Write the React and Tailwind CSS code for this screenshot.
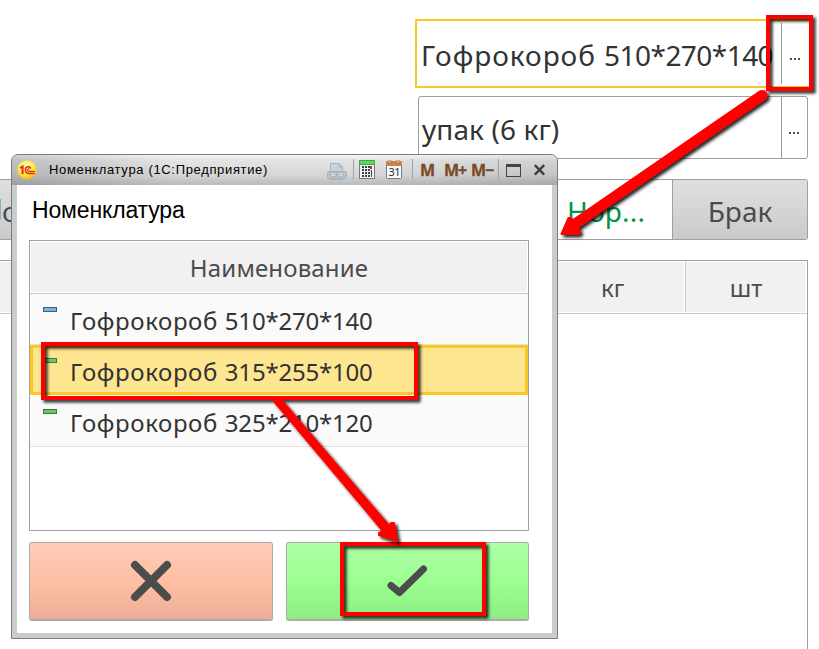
import React from "react";

const SANS = "font-['Noto_Sans','Open_Sans',sans-serif]";

function MoreButton() {
  return (
    <div className="flex shrink-0 items-center justify-center gap-[2px]">
      <i className="size-[2px] bg-[#4c4c4c]" />
      <i className="size-[2px] bg-[#4c4c4c]" />
      <i className="size-[2px] bg-[#4c4c4c]" />
    </div>
  );
}

function Background() {
  return (
    <div className={`flex h-full flex-col ${SANS} text-[#333]`}>
      <div className="mt-[19px] ml-[415px] flex h-[69px] w-[396px] border-2 border-[#f9c922] py-[2px]">
        <div className="flex w-[364px] items-center pl-[4px] text-[28px] whitespace-nowrap">
          <span className="pt-[3px] tracking-[0.95px]">
            Гофрокороб <span className="tracking-[-0.55px]">510*270*140</span>
          </span>
        </div>
        <div className="flex w-[26px] items-center justify-center border-l border-[#999] pt-[11px]">
          <MoreButton />
        </div>
      </div>
      <div className="mt-[8px] ml-[418px] flex h-[63px] w-[390px] rounded-[3px] border border-[#a0a0a0]">
        <div className="flex w-[362px] items-center pl-[3px] text-[28px] tracking-[0.1px] whitespace-nowrap">
          <span className="pt-[3px]">упак (6 кг)</span>
        </div>
        <div className="flex w-[25px] items-center justify-center border-l border-[#999] pt-[11px]">
          <MoreButton />
        </div>
      </div>
      <div className="mt-[20px] flex h-[61px] w-[808px] rounded-r-[3px] border border-l-0 border-[#a0a0a0]">
        <div className="flex w-[300px] items-center bg-linear-to-b from-[#dfdfdf] to-[#cbcbcb] text-[28px] text-[#4c4c4c]">
          <i className="h-[21px] w-px bg-[#79b4d6]" />
          <span className="ml-[1px] pt-[3px]">о</span>
        </div>
        <div className="flex w-[373px] items-center border-r border-[#a0a0a0] pl-[267px] text-[28px] text-[#009646]">
          <span className="pt-[2px] tracking-[0.2px]">Нор...</span>
        </div>
        <div className="flex flex-1 items-center justify-center bg-linear-to-b from-[#dfdfdf] to-[#cbcbcb] text-[28px] text-[#4c4c4c]">
          <span className="pt-[2px]">Брак</span>
        </div>
      </div>
      <div className="mt-[20px] w-[808px] flex-1 border-t border-r border-[#a0a0a0]">
        <div className="flex h-[53px] border-b border-[#c8c8c8] pt-px pr-px pb-px text-[24px] text-[#4c4c4c]">
          <div className="mr-px flex w-[684px] items-center bg-[#f1f1f1] pt-[2px] pl-[601px]">кг</div>
          <div className="flex flex-1 items-center justify-center border-l border-[#c8c8c8] bg-[#f1f1f1] pt-[2px]">шт</div>
        </div>
      </div>
    </div>
  );
}

function Logo() {
  return (
    <svg width="20" height="20" viewBox="0 0 20 20">
      <defs>
        <radialGradient id="sun" cx="45%" cy="30%" r="70%">
          <stop offset="0" stopColor="#fffbb8" />
          <stop offset="0.6" stopColor="#ffe93c" />
          <stop offset="1" stopColor="#f2b624" />
        </radialGradient>
      </defs>
      <circle cx="10" cy="10" r="9.6" fill="url(#sun)" />
      <g fill="none" stroke="#e02a1c" strokeWidth="1.5">
        <path d="M3.2 8 L5.6 6.6 V14" strokeWidth="2" />
        <path d="M13.8 8.5 C13 5.800 8.400 6 8.400 9.700 C8.400 12.200 10 13.400 12 13.400 H17.800" />
        <path d="M12.400 9.200 C11.600 8.400 10.400 9 10.500 10 C10.600 11 11.300 11.300 12.200 11.300 H17.800" strokeWidth="1.200" />
      </g>
    </svg>
  );
}

function PrinterIcon() {
  return (
    <svg className="mt-[2px]" width="20" height="19" viewBox="0 0 20 19" fill="#bcc4ca" stroke="#a9b3bc">
      <path d="M3.500 9 V1.500 H12 L15.500 5 V9" fill="#ccd3d8" />
      <path d="M12 1.500 V5 H15.500" fill="none" />
      <rect x="0.500" y="9.500" width="19" height="7" rx="1.500" />
      <rect x="3.500" y="10.500" width="6.500" height="4" rx="2" fill="#d3d7da" />
      <rect x="10" y="10.500" width="6.500" height="4" rx="2" fill="#d3d7da" />
      <path d="M7.500 12.500 H12.500" />
      <path d="M3 17.500 H17" />
    </svg>
  );
}

function CalculatorIcon() {
  return (
    <svg width="16" height="19" viewBox="0 0 16 19" shapeRendering="crispEdges">
      <rect x="0" y="1" width="16" height="18" fill="#6e7a86" />
      <rect x="1" y="2" width="14" height="16" fill="#f3f5f6" />
      <rect x="0" y="0" width="16" height="5" fill="#43a84a" />
      <rect x="1" y="1" width="14" height="3" fill="#5fd25f" />
      {[6, 9, 12, 15].map((y) =>
        [3, 6, 9].map((x) => <rect key={`${x}-${y}`} x={x} y={y} width="2" height="2" fill="#3a4148" />)
      )}
      <rect x="11" y="6" width="2" height="3" fill="#f01818" />
      <rect x="12" y="10" width="1" height="7" fill="#3a4148" />
    </svg>
  );
}

function CalendarIcon() {
  return (
    <svg width="17" height="19" viewBox="0 0 17 19">
      <rect x=".5" y="2.500" width="15" height="16" rx="1" fill="#f8f9fa" stroke="#6e7f8d" />
      <rect x="0" y="1" width="16" height="5" rx="1" fill="#c98350" />
      <rect x="3" y="0" width="2" height="3" fill="#f3d9c2" stroke="#9a5a30" strokeWidth=".5" />
      <rect x="11" y="0" width="2" height="3" fill="#f3d9c2" stroke="#9a5a30" strokeWidth=".5" />
      <text x="8.200" y="15.800" textAnchor="middle" fontSize="11" letterSpacing="-0.500" fontFamily="Noto Sans, sans-serif" fill="#26323c">31</text>
    </svg>
  );
}

function TitleBar() {
  return (
    <div className="flex h-[30px] items-center rounded-t-[6px] bg-[linear-gradient(90deg,rgba(110,112,116,0.28)_0%,rgba(255,255,255,0.15)_30%,rgba(255,255,255,0.15)_65%,rgba(110,112,116,0.12)_100%),linear-gradient(180deg,#f4f4f4_0%,#dedede_20%,#cfd0d1_65%,#adaeb0_100%)] pl-[5px]">
      <Logo />
      <span className="ml-[12px] w-[278px] font-['Liberation_Sans',Arial,sans-serif] text-[13px] tracking-[0.66px] whitespace-nowrap text-black">
        Номенклатура (1С:Предприятие)
      </span>
      <PrinterIcon />
      <i className="mb-[2px] ml-[6px] h-[20px] w-px bg-[#a2a2a2]" />
      <div className="mb-[2px] ml-[5px]"><CalculatorIcon /></div>
      <div className="mb-[2px] ml-[11px]"><CalendarIcon /></div>
      <i className="mb-[2px] ml-[9px] h-[20px] w-px bg-[#a2a2a2]" />
      <div className="ml-[7px] flex font-['Open_Sans',sans-serif] text-[16px] leading-none font-bold text-[#7a4a26] [-webkit-text-stroke:0.3px_#7a4a26]">
        <span className="w-[24px] tracking-[-1px]">M</span>
        <span className="w-[27px] tracking-[-1px]">M+</span>
        <span className="w-[27px] tracking-[-1px]">M−</span>
      </div>
      <i className="mb-[2px] h-[20px] w-px bg-[#a2a2a2]" />
      <i className="ml-[7px] h-[13px] w-[15px] border border-t-[3px] border-[#444]" />
      <svg className="ml-[13px]" width="11" height="12" viewBox="0 0 11 12" stroke="#3c3c3c" strokeWidth="2.400">
        <path d="M.8 1.200 L10.200 10.600 M10.200 1.200 L.8 10.600" />
      </svg>
    </div>
  );
}

const rows = [
  { name: "Гофрокороб", size: "510*270*140", blue: true },
  { name: "Гофрокороб", size: "315*255*100", selected: true },
  { name: "Гофрокороб", size: "325*210*120" },
];

function Dialog() {
  return (
    <div className="absolute top-[154px] left-[11px] flex h-[485px] w-[547px] flex-col rounded-t-[7px] border border-[#7c7c7e] bg-[#c9cbcc]">
      <TitleBar />
      <div className="mx-[5px] mb-[5px] flex flex-1 flex-col bg-white px-[12px] pb-[12px]">
        <h1 className="mt-[12px] ml-[3px] h-[43px] font-['Liberation_Sans',Arial,sans-serif] text-[23px] leading-[26px] tracking-[-0.15px] text-black">
          Номенклатура
        </h1>
        <div className={`h-[291px] w-[500px] border border-[#a0a0a0] ${SANS} text-[24px] text-[#333]`}>
          <div className="h-[53px] border-b border-[#c8c8c8] p-px">
            <div className="flex h-full items-center justify-center bg-[#f1f1f1] pt-[2px] tracking-[0.15px] text-[#4c4c4c]">Наименование</div>
          </div>
          {rows.map((r) => (
            <div
              key={r.size}
              className={
                r.selected
                  ? "mb-px flex h-[50px] border-[3px] border-[#f9c922] bg-[#fee590] pl-[10px]"
                  : "flex h-[51px] border-b border-[#e2e2e2] bg-[#fafafa] pl-[13px]"
              }
            >
              <i
                className={`h-[5px] w-[14px] border ${r.selected ? "mt-[10px]" : "mt-[13px]"} ${
                  r.blue ? "border-[#355f80] bg-[#7fb2d8]" : "border-[#2f7f35] bg-[#6cc76c]"
                }`}
              />
              <span
                className={`ml-[13px] leading-[54px] tracking-[0.62px] whitespace-nowrap ${r.selected ? "-mt-[3px]" : ""}`}
              >
                {r.name} <span className="tracking-[-0.2px]">{r.size}</span>
              </span>
            </div>
          ))}
        </div>
        <div className="mt-[11px] flex gap-[13px]">
          <div className="flex h-[79px] w-[244px] items-center justify-center rounded-[3px] border border-b-2 border-[#ababab] bg-linear-to-b from-[#ffcdb8] via-[#ffbfa4] to-[#ecae97]">
            <svg width="42" height="42" viewBox="0 0 42 42" stroke="#4c4c4c" strokeWidth="8" strokeLinecap="round">
              <path d="M5 5 L37 37 M37 5 L5 37" />
            </svg>
          </div>
          <div className="flex h-[79px] w-[243px] items-center justify-center rounded-[3px] border border-b-2 border-[#ababab] bg-linear-to-b from-[#aeffa5] via-[#9bff92] to-[#8ded84] pr-[2px]">
            <svg width="42" height="34" viewBox="0 0 42 34" fill="none" stroke="#4c4c4c" strokeWidth="7" strokeLinecap="round" strokeLinejoin="round">
              <path d="M5 21.500 L13.500 28.500 L37.500 5" />
            </svg>
          </div>
        </div>
      </div>
    </div>
  );
}

function Annotations() {
  return (
    <svg className="absolute top-0 left-0" width="819" height="649" viewBox="0 0 819 649">
      <defs>
        <filter id="shade" x="-10%" y="-10%" width="120%" height="120%">
          <feDropShadow dx="2.500" dy="2.500" stdDeviation="1.500" floodColor="#000" floodOpacity="0.850" />
        </filter>
      </defs>
      <g filter="url(#shade)" fill="none" stroke="#f00" strokeWidth="4">
        <rect x="768" y="17" width="43" height="72" />
        <rect x="43" y="344" width="373" height="54" />
        <rect x="342" y="544" width="142" height="70" />
      </g>
      <g filter="url(#shade)" fill="#f00" stroke="#f00" strokeLinejoin="round">
        <path d="M760 92 L574 220 L577 227 L765 98 Z" strokeWidth="3" />
        <circle cx="762.500" cy="95" r="5" strokeWidth="0" />
        <path d="M561.500 234 L568.500 218 L572 219 L580 232 L578 234 Z" strokeWidth="2" />
        <path d="M274 401 L384 532 L390 527 L282 401 Z" strokeWidth="2" />
        <path d="M397 541 L379 535 L379 533 L386 530 L391 523 L394 523 Z" strokeWidth="2" />
      </g>
    </svg>
  );
}

export default function App() {
  return (
    <div className="relative h-[649px] w-[819px] overflow-hidden bg-white">
      <Background />
      <Dialog />
      <Annotations />
    </div>
  );
}
